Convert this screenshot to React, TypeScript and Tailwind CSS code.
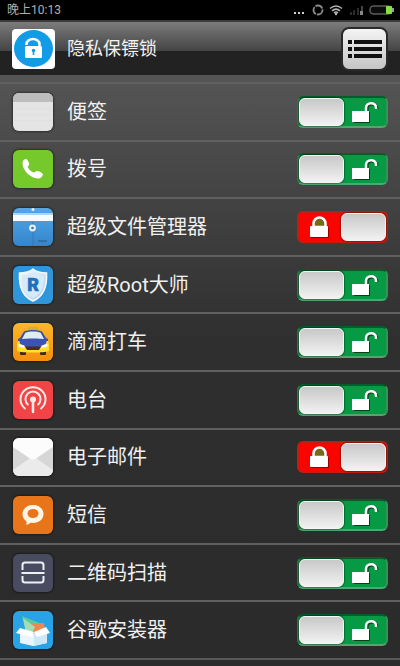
import { useState } from 'react';
import type { ReactNode } from 'react';

type AppItem = {
  id: string;
  name: string;
  locked: boolean;
  icon: ReactNode;
};

const initialApps: AppItem[] = [
  { id: 'notes', name: '便签', locked: false, icon: <NotesIcon /> },
  { id: 'dialer', name: '拨号', locked: false, icon: <DialerIcon /> },
  { id: 'files', name: '超级文件管理器', locked: true, icon: <FilesIcon /> },
  { id: 'root', name: '超级Root大师', locked: false, icon: <RootIcon /> },
  { id: 'taxi', name: '滴滴打车', locked: false, icon: <TaxiIcon /> },
  { id: 'radio', name: '电台', locked: false, icon: <RadioIcon /> },
  { id: 'mail', name: '电子邮件', locked: true, icon: <MailIcon /> },
  { id: 'sms', name: '短信', locked: false, icon: <SmsIcon /> },
  { id: 'scan', name: '二维码扫描', locked: false, icon: <ScanIcon /> },
  { id: 'installer', name: '谷歌安装器', locked: false, icon: <InstallerIcon /> },
];

function NotesIcon() {
  return (
    <svg viewBox="0 0 40 38" className="size-full">
      <rect width="40" height="38" fill="#e4e4e4" />
      <rect width="40" height="9" fill="#bdbdbd" />
      <path d="M0 16h40M0 22h40M0 28h40" stroke="#dfdfdf" strokeWidth="1" />
    </svg>
  );
}

function DialerIcon() {
  return (
    <svg viewBox="0 0 40 38" className="size-full">
      <rect width="40" height="38" fill="#75c92b" />
      <path
        d="M9.5 13c0-2.5 2-4 3.5-4 1.8.5 3.2 3.8 3.2 5.5 0 1.2-1.5 1.5-1.5 2.5 1 2.6 3.6 4.8 6.3 5.6 1 .2 1.5-1.6 3-1.6 2 .2 5 1.700 6 3.200-.3 2.200-2.200 4.300-5 4.300C17.200 28 9.500 20.500 9.500 13z"
        fill="#fff"
      />
    </svg>
  );
}

function FilesIcon() {
  return (
    <svg viewBox="0 0 40 38" className="size-full">
      <defs>
        <linearGradient id="filesBlue" x1="0" y1="0" x2="0" y2="1">
          <stop offset="0" stopColor="#52a9e6" />
          <stop offset="1" stopColor="#3585cc" />
        </linearGradient>
      </defs>
      <rect width="40" height="38" fill="url(#filesBlue)" />
      <rect y="5" width="40" height="2" fill="#a9d8f5" />
      <rect y="7" width="40" height="6" fill="#f8fbfd" />
      <path d="M20 14v24" stroke="#3079ba" />
      <circle cx="20" cy="1.5" r="1.5" fill="#e5f4ff" />
      <circle cx="19.5" cy="20" r="3.4" fill="#e6f0f6" />
      <circle cx="19.5" cy="20" r="1.3" fill="#41739a" />
      <path d="M25 33h9" stroke="#2769a3" strokeWidth="1.5" />
    </svg>
  );
}

function RootIcon() {
  return (
    <svg viewBox="0 0 40 38" className="size-full">
      <defs>
        <linearGradient id="rootShield" x1="0" y1="0" x2="1" y2="1">
          <stop offset="0" stopColor="#f7fbff" />
          <stop offset="1" stopColor="#a8cfec" />
        </linearGradient>
      </defs>
      <rect width="40" height="38" fill="#2f96dc" />
      <path
        d="M20 3c3.5 3 8 4 13.5 4 .8 13-2 23-13.5 28C8.500 30 5.700 20 6.500 7 12 7 16.500 6 20 3z"
        fill="url(#rootShield)"
        stroke="#f4faff"
        strokeWidth="1.5"
      />
      <path d="M20 6c3 2.200 6.500 3.200 11 3.200.5 11-2 18.800-11 22.800-9-4-11.500-11.800-11-22.800C13.500 9.200 17 8.200 20 6z" fill="#d8eaf7" />
      <text
        x="20"
        y="25"
        textAnchor="middle"
        fontFamily="Roboto, sans-serif"
        fontSize="18"
        fontWeight="900"
        fill="#1f71bd"
        stroke="#1f71bd"
        strokeWidth="0.6"
      >
        R
      </text>
    </svg>
  );
}

function TaxiIcon() {
  return (
    <svg viewBox="0 0 40 38" className="size-full">
      <defs>
        <linearGradient id="taxiSky" x1="0" y1="0" x2="0" y2="1">
          <stop offset="0" stopColor="#fcb62c" />
          <stop offset="1" stopColor="#f58f10" />
        </linearGradient>
      </defs>
      <rect width="40" height="38" fill="url(#taxiSky)" />
      <rect x="15" y="4" width="10" height="4" rx="1" fill="#d0b428" />
      <rect x="7" y="26" width="6" height="6" rx="1" fill="#3d2b1d" />
      <rect x="27" y="26" width="6" height="6" rx="1" fill="#3d2b1d" />
      <path d="M11 8.500c5-2 13-2 18 0l4 6.500 2 1v3H5v-3l2-1z" fill="#3a50a8" />
      <path d="M12.500 9.500c4-1.500 11-1.500 15 0L31 16H9z" fill="#dfecf0" />
      <path d="M5 18h30l1 3v7c-5 2-27 2-32 0v-7z" fill="#ffe02a" />
      <path d="M6 16.500c5-1.500 23-1.500 28 0l-1 4-6 4H13l-6-4z" fill="#3d53b4" />
      <path d="M5.500 21l6 1.500V25l-6-1.500zM34.500 21l-6 1.500V25l6-1.500z" fill="#fff" />
      <path d="M12 23.500h16L26 27H14z" fill="#4b2b25" />
    </svg>
  );
}

function RadioIcon() {
  return (
    <svg viewBox="0 0 40 38" className="size-full">
      <rect width="40" height="38" fill="#f04446" />
      <g fill="none" stroke="#ffe9e4" strokeWidth="2" strokeLinecap="round">
        <path d="M12 27.500a12.500 12 0 1 1 16 0" />
        <path d="M14.800 23.500a7.500 7.500 0 1 1 10.400 0" />
        <path d="M20 19v12" strokeWidth="2.5" />
      </g>
      <circle cx="20" cy="18.5" r="3" fill="#ffe9e4" />
    </svg>
  );
}

function MailIcon() {
  return (
    <svg viewBox="0 0 40 38" className="size-full">
      <rect width="40" height="38" fill="#d6d6d6" />
      <path d="M0 38v-6l20-14 20 14v6z" fill="#ebebeb" />
      <path d="M0 0h40v9L23 20.500c-2 1.300-4 1.300-6 0L0 9z" fill="#fcfcfc" />
    </svg>
  );
}

function SmsIcon() {
  return (
    <svg viewBox="0 0 40 38" className="size-full">
      <rect width="40" height="38" fill="#e8751a" />
      <path
        d="M20 9c6 0 10.500 3.800 10.500 9S26 27 20 27l-2.500-.2c-1.200 1.300-2.500 2-4.500 2 .8-1 .8-2.200.4-3.500C10.800 23.500 9.500 21 9.500 18c0-5.200 4.500-9 10.500-9z"
        fill="#fff5e6"
      />
      <ellipse cx="20" cy="17.5" rx="5.5" ry="4.5" fill="#e8751a" />
    </svg>
  );
}

function ScanIcon() {
  return (
    <svg viewBox="0 0 40 38" className="size-full">
      <rect width="40" height="38" fill="#494c61" />
      <g fill="none" stroke="#f0f0f4" strokeWidth="2">
        <path d="M9.500 16v-5c0-1.500 1-2.500 2.500-2.500h16c1.500 0 2.500 1 2.500 2.500v5" />
        <path d="M9.500 22v4c0 1.500 1 2.500 2.500 2.500h16c1.500 0 2.500-1 2.500-2.500v-4" />
        <path d="M8.500 19h23" />
      </g>
    </svg>
  );
}

function InstallerIcon() {
  return (
    <svg viewBox="0 0 40 38" className="size-full">
      <rect width="40" height="38" fill="#28a3e6" />
      <path d="M9 5l20 8v8H13z" fill="#58c9a0" />
      <path d="M15 13l16-1 1 10H16z" fill="#ee8850" />
      <path d="M10 7l12 9-3 6h-6z" fill="#a5dcb4" />
      <path d="M7 20l13 3 14-3v12l-14 3-13-3z" fill="#eaf6fd" />
      <path d="M21 22l13-3v13l-13 3z" fill="#cfe8f6" />
      <path d="M7 17l14 4-2 5-16-4zM33 16l4 6-13 4-3-5z" fill="#fff" />
    </svg>
  );
}

function PadlockIcon({ open }: { open: boolean }) {
  if (open) {
    return (
      <svg viewBox="0 0 28 24" className="h-6 w-7">
        <path d="M16 13V9a5 5 0 0 1 10 0" fill="none" stroke="#063f1e" strokeWidth="3" />
        <rect x="3" y="12" width="16" height="11" fill="#063f1e" />
        <path d="M15 12V8c0-6 10-6.500 10-.5v1.500" fill="none" stroke="#fff" strokeWidth="2.5" />
        <rect x="1" y="11" width="17" height="11" fill="#fff" />
      </svg>
    );
  }
  return (
    <svg viewBox="0 0 28 24" className="h-6 w-7">
      <rect x="5" y="12" width="18" height="11" rx="1" fill="#900" />
      <path d="M7.500 12V8.500a6 6 0 0 1 12 0V12z" fill="#77681a" stroke="#fff" strokeWidth="2.5" />
      <rect x="4" y="11" width="18" height="11" rx="1" fill="#fff" />
    </svg>
  );
}

function LockSwitch({ id, locked, onToggle }: { id: string; locked: boolean; onToggle: () => void }) {
  return (
    <div
      className={`relative flex h-8 w-[91px] shrink-0 items-center rounded-md border-2 ${
        locked
          ? 'flex-row-reverse border-[#c41c0f] bg-[#f90500]'
          : 'border-t-[#075c2b] border-r-[#2f9656] border-b-[#4fa670] border-l-[#2b7a48] bg-[#059a43]'
      }`}
    >
      <input
        id={id}
        type="checkbox"
        checked={locked}
        onChange={onToggle}
        className="absolute inset-0 z-10 size-full cursor-pointer appearance-none"
      />
      <span className="h-7 w-[45px] rounded-md border border-[#f5f5f5] bg-linear-to-b from-[#c8c8c8] to-[#f2f2f2] shadow-[0_0_1px_1px_rgba(0,0,0,0.3)]" />
      <span className="flex flex-1 justify-center">
        <PadlockIcon open={!locked} />
      </span>
    </div>
  );
}

function StatusBar() {
  return (
    <div className="flex h-5 items-center justify-between bg-black pr-1 pl-[7px] text-xs text-[#b0b0b0]">
      <span>晚上10:13</span>
      <svg viewBox="0 0 104 16" className="h-4 w-[104px]">
        <path d="M2 10h2v2H2zM6 10h2v2H6zM10 10h2v2h-2z" fill="#d0d0d0" />
        <circle cx="26" cy="8" r="4.5" fill="none" stroke="#8c8c8c" strokeWidth="1.8" strokeDasharray="8 1" />
        <g fill="none" stroke="#b5b5b5" strokeWidth="1.6">
          <path d="M38 6.500q6-5 12 0" />
          <path d="M40 8.800q4-3.500 8 0" />
          <path d="M42 11q2-2 4 0" />
        </g>
        <circle cx="44" cy="12" r="1.2" fill="#b5b5b5" />
        <path d="M58 10h2v3h-2zM61 8h2v5h-2zM65 6h2v7h-2z" fill="#2c2c2c" />
        <path d="M69 4h2v9h-2z" fill="#444" />
        <path d="M68 9h3v4h-3z" fill="#888" />
        <rect x="78" y="4" width="21" height="8" rx="3.5" fill="#0b0b0b" stroke="#5c5c5c" strokeWidth="1.5" />
        <rect x="94" y="4" width="6" height="8" rx="1" fill="#84e33c" />
        <rect x="100" y="6" width="2" height="4" fill="#9a9a9a" />
      </svg>
    </div>
  );
}

function Header() {
  return (
    <header className="flex h-[55px] items-center justify-between border-t-2 border-[#3c3c3c] bg-linear-to-b from-[#7c7c7c] from-0% via-[#444] via-55% to-[#222] to-55% px-3">
      <div className="flex items-center gap-3">
        <svg viewBox="0 0 43 40" className="h-10 w-[43px] rounded-sm">
          <rect width="43" height="40" fill="#fff" />
          <ellipse cx="21.5" cy="19.5" rx="19.5" ry="18.5" fill="#149be6" />
          <path d="M14.500 16v-1a6.500 5 0 0 1 13 0v3" fill="none" stroke="#fff" strokeWidth="2.5" />
          <rect x="13" y="17" width="17" height="12" rx="1.5" fill="#fff" />
          <circle cx="21.5" cy="21.5" r="1.8" fill="#149be6" />
          <path d="M21.500 21v5" stroke="#149be6" strokeWidth="1.6" />
        </svg>
        <h1 className="text-lg text-[#f2f2f2]">隐私保镖锁</h1>
      </div>
      <button
        type="button"
        aria-label="菜单"
        className="flex h-11 w-[47px] items-center justify-center rounded-lg border-2 border-[#2a2a2a] bg-linear-to-b from-[#f4f4f4] to-[#c5c5c5]"
      >
        <svg viewBox="0 0 34 20" className="h-5 w-[34px]">
          <path d="M0 1h4v4H0zM0 8h4v4H0zM0 15h4v4H0zM6 1h28v4H6zM6 8h28v4H6zM6 15h28v4H6z" fill="#111" />
        </svg>
      </button>
    </header>
  );
}

export default function App() {
  const [apps, setApps] = useState(initialApps);

  const toggle = (id: string) => {
    setApps(apps.map((app) => (app.id === id ? { ...app, locked: !app.locked } : app)));
  };

  return (
    <div className="flex min-h-screen flex-col bg-[#2a2a2a] font-[Roboto,'Noto_Sans_CJK_SC',sans-serif]">
      <StatusBar />
      <Header />
      <main className="grow bg-linear-to-b from-[#555] from-0% via-[#2f2f2f] via-45% to-[#2b2b2b] pt-[7px]">
        <ul className="grid min-h-[578px] auto-rows-fr border-b-2 border-[#585858]">
          {apps.map((app) => (
            <li
              key={app.id}
              className="flex items-center justify-between border-t-2 border-[#606060] pr-3 pl-[13px]"
            >
              <label htmlFor={app.id} className="flex items-center gap-3.5 text-xl text-[#f0f0f0]">
                <span className="h-[38px] w-10 overflow-hidden rounded-md shadow-[0_0_2px_1px_rgba(0,0,0,0.4)]">
                  {app.icon}
                </span>
                {app.name}
              </label>
              <LockSwitch id={app.id} locked={app.locked} onToggle={() => toggle(app.id)} />
            </li>
          ))}
        </ul>
      </main>
    </div>
  );
}
